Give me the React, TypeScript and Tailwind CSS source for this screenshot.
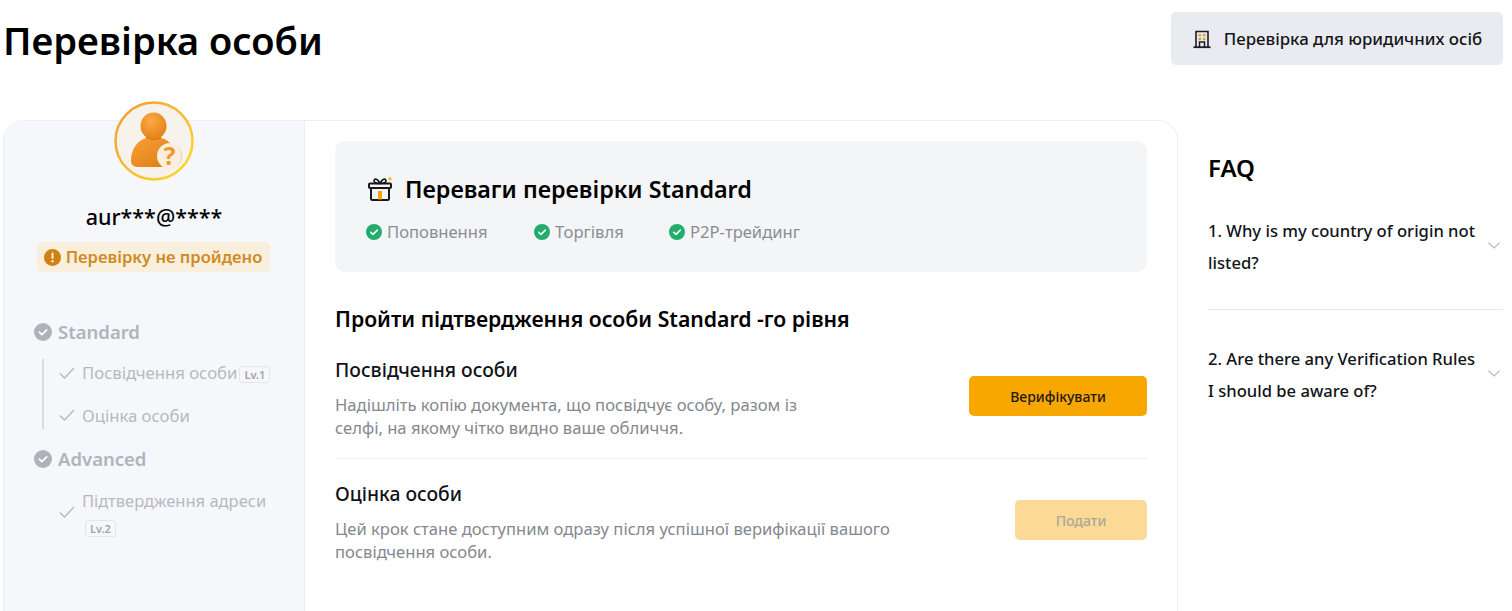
import React from 'react';

const AvatarIcon = () => (
    <svg width="80" height="80" viewBox="0 0 80 80" fill="none">
        <defs>
            <linearGradient id="ring" x1="0" y1="0" x2="1" y2="1">
                <stop offset="0" stopColor="#f39a35" />
                <stop offset="1" stopColor="#fcdc2c" />
            </linearGradient>
            <linearGradient id="body" x1="0" y1="0" x2="1" y2="1">
                <stop offset="0" stopColor="#f9a037" />
                <stop offset="1" stopColor="#dc7a12" />
            </linearGradient>
            <radialGradient id="head" cx="0.4" cy="0.3" r="0.8">
                <stop offset="0" stopColor="#fbab45" />
                <stop offset="1" stopColor="#e27c12" />
            </radialGradient>
        </defs>
        <circle cx="40" cy="40" r="38.500" fill="#f7f3ec" stroke="url(#ring)" strokeWidth="2.500" />
        <path d="M32 36h15v6H32z" fill="#c96e10" />
        <path d="M17 60c0-13 7-21 16-23 4 2.500 10 2.500 14 0 9 2 15 10 15 23 0 4-3 6-8 6H25c-5 0-8-2-8-6z" fill="url(#body)" />
        <ellipse cx="39.500" cy="25" rx="13" ry="13.500" fill="url(#head)" />
        <circle cx="56" cy="55" r="13" fill="#faeedd" />
        <path d="M62 44a13 13 0 0 1 0 22 13 13 0 0 0 5-11 13 13 0 0 0-5-11z" fill="#ddd6c9" />
        <text x="55.500" y="64" textAnchor="middle" fontSize="25" fontWeight="700" fill="#ee9a32" fontFamily="Noto Sans, sans-serif">?</text>
    </svg>
);

const BuildingIcon = () => (
    <svg width="20" height="20" viewBox="0 0 20 20" fill="none">
        <path d="M4 18V2.500h12V18" stroke="#1a1d22" strokeWidth="1.600" />
        <path d="M1.500 18.200h17" stroke="#1a1d22" strokeWidth="1.800" />
        <path d="M7.500 18v-5h5v5" stroke="#1a1d22" strokeWidth="1.500" />
        <rect x="6.500" y="5" width="2.600" height="2.400" fill="#d9a441" />
        <rect x="10.900" y="5" width="2.600" height="2.400" fill="#d9a441" />
        <rect x="6.500" y="8.800" width="2.600" height="2.400" fill="#d9a441" />
        <rect x="10.900" y="8.800" width="2.600" height="2.400" fill="#d9a441" />
    </svg>
);

const GiftIcon = () => (
    <svg width="26" height="26" viewBox="0 0 26 26" fill="none">
        <path d="M3 12v10.500a1.500 1.500 0 0 0 1.500 1.500h15a1.500 1.500 0 0 0 1.500-1.500V12" stroke="#16181d" strokeWidth="2" />
        <rect x="1" y="7.500" width="22" height="4.500" rx="1" stroke="#16181d" strokeWidth="2" />
        <path d="M12 7.500C9 7.500 6 6.800 6 4.800 6 3.400 7.500 2.800 8.800 3.400 10.500 4.200 12 7.500 12 7.500zM12 7.500c3 0 6-.7 6-2.700 0-1.400-1.500-2-2.800-1.400C13.500 4.200 12 7.500 12 7.500z" stroke="#16181d" strokeWidth="1.700" />
        <rect x="10" y="15" width="4" height="8.500" fill="#f8a600" />
        <path d="M22 0c.3 1.800.9 2.400 2.500 2.700-1.600.3-2.200.9-2.500 2.700-.3-1.800-.9-2.400-2.500-2.700C21.100 2.400 21.700 1.800 22 0z" fill="#f8a600" />
    </svg>
);

const CircleCheck = ({ size, fill }: { size: number; fill: string }) => (
    <svg width={size} height={size} viewBox="0 0 18 18" className="shrink-0">
        <circle cx="9" cy="9" r="9" fill={fill} />
        <path d="M5.300 9.200l2.600 2.500 4.800-4.800" fill="none" stroke="#fff" strokeWidth="1.700" strokeLinecap="round" strokeLinejoin="round" />
    </svg>
);

const ThinCheck = () => (
    <svg width="16" height="12" viewBox="0 0 16 12" fill="none" className="shrink-0">
        <path d="M1 6.500l4.500 4.500L15 1" stroke="#b3b6bc" strokeWidth="1.300" />
    </svg>
);

const Chevron = () => (
    <svg width="12" height="7" viewBox="0 0 12 7" fill="none" className="shrink-0">
        <path d="M.5.700L6 6l5.500-5.300" stroke="#b9bcc2" strokeWidth="1.200" />
    </svg>
);

const LvBadge = ({ label }: { label: string }) => (
    <span className="inline-flex h-[17px] items-center rounded-[3px] border border-[#e3e5ea] px-[4px] text-[11px] font-semibold leading-none text-[#a1a4aa]">
        {label}
    </span>
);

const Sidebar = () => (
    <div className="w-[301px] shrink-0 rounded-l-[20px] border-r border-[#eceef2] bg-[#f5f7fb]">
        <div className="-mt-[20px] flex flex-col items-center">
            <AvatarIcon />
            <div className="mt-[20px] text-[21.500px] font-medium leading-[32px] text-black">aur***@****</div>
            <div className="mt-[9px] mr-[2px] flex h-[30px] w-[233px] items-center justify-center gap-[5px] rounded-[5px] bg-[#f8efdd] text-[16.600px] font-semibold text-[#d08a1e]">
                <svg width="17" height="17" viewBox="0 0 17 17" className="shrink-0">
                    <circle cx="8.500" cy="8.500" r="8.500" fill="#cf8213" />
                    <rect x="7.500" y="3.500" width="2" height="6.500" rx="1" fill="#f8efdd" />
                    <circle cx="8.500" cy="12.300" r="1.200" fill="#f8efdd" />
                </svg>
                Перевірку не пройдено
            </div>
        </div>
        <div className="mt-[46px] pl-[30px] pr-[30px]">
            <div className="flex h-[28px] items-center gap-[6px] text-[18.500px] font-semibold text-[#b0b4bb]">
                <CircleCheck size={18} fill="#aeb2b9" />
                Standard
            </div>
            <div className="mt-[13px] ml-[8px] flex h-[70px] flex-col border-l-2 border-[#d9dbe0] pl-[15px] text-[16.700px] text-[#b7bac0]">
                <div className="flex h-[28px] items-center">
                    <ThinCheck />
                    <span className="ml-[7px] whitespace-nowrap">Посвідчення особи</span>
                    <span className="ml-[2px]"><LvBadge label="Lv.1" /></span>
                </div>
                <div className="mt-[15px] flex h-[28px] items-center">
                    <ThinCheck />
                    <span className="ml-[7px] whitespace-nowrap">Оцінка особи</span>
                </div>
            </div>
            <div className="mt-[16px] flex h-[28px] items-center gap-[6px] text-[18.500px] font-semibold text-[#b0b4bb]">
                <CircleCheck size={18} fill="#aeb2b9" />
                Advanced
            </div>
            <div className="mt-[14px] ml-[25px] flex items-center text-[16.500px] text-[#b7bac0]">
                <ThinCheck />
                <div className="ml-[7px]">
                    <div className="h-[28px] whitespace-nowrap leading-[28px]">Підтвердження адреси</div>
                    <div className="mt-[5px] ml-[3px] flex"><LvBadge label="Lv.2" /></div>
                </div>
            </div>
        </div>
    </div>
);

const Perk = ({ label, className }: { label: string; className: string }) => (
    <div className={`flex items-center gap-[5px] ${className}`}>
        <CircleCheck size={16} fill="#22ad6c" />
        <span>{label}</span>
    </div>
);

const Step = ({ title, text, button, textWidth }: { title: string; text: string; button: React.ReactNode; textWidth: string }) => (
    <div className="flex items-start justify-between">
        <div>
            <div className="text-[19.300px] font-medium leading-[26px] text-[#111318]">{title}</div>
            <div className={`mt-[11px] text-[16.600px] leading-[22.500px] text-[#85888f] ${textWidth}`}>{text}</div>
        </div>
        {button}
    </div>
);

const Main = () => (
    <div className="flex-1 px-[30px] pt-[20px]">
        <div className="h-[131px] rounded-[10px] bg-[#f4f5f7] pl-[31px] pt-[32px]">
            <div className="ml-[2px] flex h-[32px] items-center gap-[11px] text-[23.300px] font-semibold text-black">
                <GiftIcon />
                Переваги перевірки Standard
            </div>
            <div className="mt-[14px] flex text-[16.600px] leading-[26px] text-[#8a8d94]">
                <Perk label="Поповнення" className="w-[168px]" />
                <Perk label="Торгівля" className="w-[135px]" />
                <Perk label="P2P-трейдинг" className="" />
            </div>
        </div>
        <div className="mt-[32px] text-[21.200px] font-semibold leading-[30px] text-black">Пройти підтвердження особи Standard -го рівня</div>
        <div className="mt-[23px]">
            <Step
                title="Посвідчення особи"
                text="Надішліть копію документа, що посвідчує особу, разом із селфі, на якому чітко видно ваше обличчя."
                textWidth="w-[490px]"
                button={
                    <button className="mt-[19px] h-[40px] w-[178px] rounded-[5px] bg-[#f8a600] text-[14px] font-medium text-[#1c1a14]">Верифікувати</button>
                }
            />
            <div className="mt-[19px] border-t border-[#f0f1f3]" />
            <div className="mt-[22px]">
                <Step
                    title="Оцінка особи"
                    text="Цей крок стане доступним одразу після успішної верифікації вашого посвідчення особи."
                    textWidth="w-[570px]"
                    button={
                        <button className="mt-[19px] h-[40px] w-[132px] rounded-[5px] bg-[#fcd995] text-[14px] font-medium text-[#aaa79c]">Подати</button>
                    }
                />
            </div>
        </div>
    </div>
);

const FaqItem = ({ question }: { question: string }) => (
    <div className="flex items-center justify-between">
        <div className="w-[272px] text-[16.600px] font-medium leading-[32px] text-[#111318]">{question}</div>
        <div className="mr-[3px] mb-[3px]"><Chevron /></div>
    </div>
);

const Faq = () => (
    <div className="ml-[30px] w-[295px] pt-[30px]">
        <div className="text-[24px] font-semibold leading-[36px] text-black">FAQ</div>
        <div className="mt-[29px] border-b border-[#e9eaed] pb-[30px]">
            <FaqItem question="1. Why is my country of origin not listed?" />
        </div>
        <div className="mt-[33px]">
            <FaqItem question="2. Are there any Verification Rules I should be aware of?" />
        </div>
    </div>
);

export default function App() {
    return (
        <div className="h-[611px] overflow-hidden bg-white font-['Noto_Sans',sans-serif]">
            <div className="flex h-[70px] items-start justify-between pl-[3px] pr-[9px] pt-[12px]">
                <h1 className="text-[38px] font-semibold leading-[56px] text-black">Перевірка особи</h1>
                <button className="flex h-[53px] w-[332px] items-center justify-center gap-[12px] rounded-[5px] bg-[#e9ebf0] text-[16.850px] font-medium text-[#14161b]">
                    <BuildingIcon />
                    Перевірка для юридичних осіб
                </button>
            </div>
            <div className="mt-[50px] flex pl-[3px]">
                <div className="flex h-[520px] w-[1175px] rounded-[20px] border border-[#eceef2]">
                    <Sidebar />
                    <Main />
                </div>
                <Faq />
            </div>
        </div>
    );
}
